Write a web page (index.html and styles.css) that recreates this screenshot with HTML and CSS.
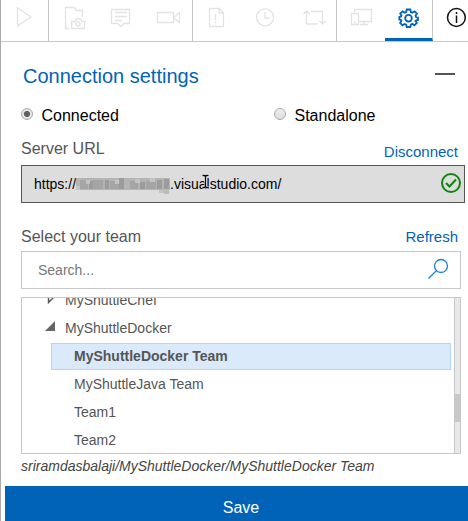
FILE: index.html
```html
<!DOCTYPE html>
<html lang="en">
<head>
<meta charset="utf-8">
<title>Connection settings</title>
<link rel="stylesheet" href="styles.css">
</head>
<body>
<div class="panel">
  <nav class="toolbar">
    <span class="tool end"><svg viewBox="0 0 48 41"><path d="M16.500 7.800V26L30 17z"/></svg></span>
    <span class="tool"><svg viewBox="0 0 48 41"><path d="M20 28.500H16.500V7.500H25.500L27 10.500H33.500V17M22.500 28.500V21.500H26L27.500 19H31.500L33 21.500H35.500V28.500z"/><circle cx="29" cy="24" r="2"/></svg></span>
    <span class="tool"><svg viewBox="0 0 48 41"><path d="M14.500 9.500H32.500V23.500H27L24 26.500L21 23.500H14.500zM18 12.500H30M18 16.500H30M18 20.500H25"/></svg></span>
    <span class="tool end"><svg viewBox="0 0 48 41"><path d="M12.500 12.500H28.500V22.500H12.500zM28.500 17.500L34.500 12.500V22.500z"/></svg></span>
    <span class="tool"><svg viewBox="0 0 48 41"><path d="M16.500 8.500H26L30.500 13V26.500H16.500zM26 8.500V13H30.500M22.500 14V20M22.500 21.500V23.500"/></svg></span>
    <span class="tool"><svg viewBox="0 0 48 41"><circle cx="24" cy="17.300" r="8.500"/><path d="M24 12V18H28.500"/></svg></span>
    <span class="tool end"><svg viewBox="0 0 48 41"><path d="M14.500 14L17.500 11L20.500 14M17.500 11V24H29M22 11.500H33.500V24M30.500 21L33.500 24L36.500 21"/></svg></span>
    <span class="tool"><svg viewBox="0 0 48 41"><path d="M17.500 12V9.500H34.500V21.500H22M14.500 13.500H21.500V24.500H14.500zM27 21.500V24.500M23 24.500H31M17 22.500H19"/></svg></span>
    <span class="tool end active"><svg viewBox="0 0 48 41"><path class="gear" d="M21.700 9.500H25.300L25.800 12L27.400 12.700L29.500 11.300L31.900 13.700L30.500 15.800L31.200 17.300L33 17.600V20L31.200 20.400L30.500 21.100L31.800 22.900L29.400 25.300L27.400 23.900L25.800 24.600L25.300 27H21.700L21.200 24.600L19.600 23.900L17.500 25.300L15.100 22.900L16.500 20.900L15.800 19.800L14.300 19.500V16.900L15.800 16.600L16.500 15.700L15.200 13.700L17.600 11.300L19.600 12.700L21.200 12z"/><circle class="gear" cx="23.500" cy="18.200" r="3.300"/></svg></span>
    <span class="tool info"><svg viewBox="0 0 48 41"><circle cx="23.400" cy="17.500" r="8.900"/><path d="M23.500 12V14M23.500 15.500V23"/></svg></span>
  </nav>
  <main class="content">
    <header class="heading"><h1>Connection settings</h1><span class="minimize"></span></header>
    <div class="modes">
      <label class="mode"><span class="radio checked"></span>Connected</label>
      <label class="mode"><span class="radio"></span>Standalone</label>
    </div>
    <div class="row server"><span class="label">Server URL</span><a>Disconnect</a></div>
    <div class="url">
      <span>https://</span><svg class="mask" viewBox="0 0 94 20">
        <path fill="#b4b4b4" d="M0 3h94v12H0z"/><path fill="#a5a5a5" d="M4 5h8v9H4zM17 5h10v9H17zM34 6h10v8H34zM54 6h8v8h-8zM70 6h10v8H70z"/><path fill="#9c9c9c" d="M13 6h4v8h-4zM29 5h4v9h-4zM43 3h5v11h-5zM64 7h5v7h-5zM81 5h5v9h-5zM88 4h5v10h-5z"/><path fill="#c4c4c4" d="M0 11h4v4H0zM10 5h4v4h-4zM39 5h4v4h-4zM59 4h5v4h-5zM74 3h5v4h-5zM83 15h5v3h-5z"/><path fill="#bbb" d="M88 14h5v5h-5z"/>
      </svg><span>.visualstudio.com/</span>
      <svg class="valid" viewBox="0 0 20 20"><circle cx="10" cy="10" r="9"/><path d="M5 10L8.500 13.500L15 6.500"/></svg>
      <svg class="cursor" viewBox="0 0 9 16"><path class="halo" d="M1.500 1.500H3.500L4.500 2.500L5.500 1.500H7.500M4.500 2V13M1.500 13.500H3.500L4.500 12.500L5.500 13.500H7.500"/><path d="M1.500 1.500H3.500L4.500 2.500L5.500 1.500H7.500M4.500 2V13M1.500 13.500H3.500L4.500 12.500L5.500 13.500H7.500"/></svg>
    </div>
    <div class="row team"><span class="label">Select your team</span><a>Refresh</a></div>
    <div class="search"><span>Search...</span><svg viewBox="0 0 22 22"><circle cx="14" cy="8" r="6.500"/><path d="M9.400 12.600L1.500 20.500"/></svg></div>
    <div class="tree">
      <div class="items">
        <div class="node parent"><svg viewBox="0 0 12 12"><path class="closed" d="M3.500 -1.500V8.500L8.500 3.500z"/></svg>MyShuttleChef</div>
        <div class="node parent"><svg viewBox="0 0 12 12"><path class="open" d="M10 -1V9H0z"/></svg>MyShuttleDocker</div>
        <div class="node leaf selected">MyShuttleDocker Team</div>
        <div class="node leaf">MyShuttleJava Team</div>
        <div class="node leaf">Team1</div>
        <div class="node leaf">Team2</div>
      </div>
      <div class="track"><div class="thumb"></div></div>
    </div>
    <p class="path">sriramdasbalaji/MyShuttleDocker/MyShuttleDocker Team</p>
  </main>
  <div class="save">Save</div>
</div>
</body>
</html>
```

FILE: styles.css
```css
* { box-sizing: border-box; }
body { margin: 0; background: #fff; font-family: "Liberation Sans", Arial, sans-serif; color: #000; overflow: hidden; }
.panel { height: 521px; border-left: 1px solid #aaa; display: flex; flex-direction: column; overflow: hidden; }
svg { fill: none; stroke: currentColor; display: block; flex: none; overflow: visible; }
.toolbar { display: flex; height: 42px; border-bottom: 1px solid #c8c8c8; flex: none; }
.tool { width: 48px; height: 41px; flex: none; color: #e3e3e3; position: relative; }
.tool svg { width: 48px; height: 41px; stroke-width: 1.3; }
.end { border-right: 1px solid #c8c8c8; }
.active { color: #0063b8; border-bottom: 3px solid #0063b8; }
.tool .gear { stroke-width: 1.8; }
.info { color: #111; }
.info svg { stroke-width: 1.5; }
.content { padding-left: 20px; }
.heading { display: flex; justify-content: space-between; height: 62px; padding: 22px 13px 0 2px; }
h1 { margin: 0; font-size: 20px; font-weight: 400; line-height: 24px; color: #0063b8; }
.minimize { width: 20px; height: 2px; margin-top: 9px; background: #555; }
.modes { display: flex; height: 34px; }
.mode { display: flex; width: 253px; flex: none; font-size: 16px; line-height: 24px; gap: 8.5px; }
.radio { width: 12px; height: 12px; margin-top: 4px; border: 1px solid #aaa; border-radius: 50%; background: linear-gradient(#eee, #ddd); flex: none; }
.checked { background: radial-gradient(circle, #606060 0 2.700px, #e5e5e5 3.400px); }
.row { display: flex; justify-content: space-between; }
.label { font-size: 16px; line-height: 20px; color: #555; }
.row a { color: #0063b8; font-size: 15px; line-height: 20px; }
.server { height: 27px; padding-right: 10px; }
.server .label { margin-top: 1px; }
.server a { margin-top: 4px; }
.url { width: 444px; height: 38px; border: 1px solid #555; background: #ddd; display: flex; align-items: center; padding: 0 3px 1px 12px; font-size: 14px; position: relative; }
.url span { padding-top: 1px; }
.mask { width: 94px; height: 20px; stroke: none; margin-top: 2px; filter: blur(0.6px); }
.valid { width: 20px; height: 20px; margin: 0 0 1px auto; color: #108610; stroke-width: 2; }
.cursor { position: absolute; left: 179px; top: 8px; width: 9px; height: 16px; color: #000; stroke-width: 1.3; }
.halo { stroke: #fff; stroke-width: 2.4; }
.team { height: 48px; padding: 24px 10px 0 0; }
.search { width: 440px; height: 38px; border: 1px solid #c8c8c8; display: flex; align-items: center; justify-content: space-between; padding: 0 11px 0 16px; font-size: 14px; color: #777; }
.search svg { width: 22px; height: 22px; color: #1a7fd6; stroke-width: 1.3; margin-bottom: 2px; }
.tree { width: 440px; height: 157px; margin-top: 8px; border: 1px solid #c8c8c8; display: flex; overflow: hidden; }
.items { flex: 1; margin-top: -12px; padding: 0 3px 0 23px; font-size: 14px; color: #555; }
.node { height: 28px; line-height: 28px; }
.parent { display: flex; gap: 8px; }
.parent svg { width: 12px; height: 12px; margin-top: 8px; }
.closed { stroke-width: 1.4; }
.open { fill: #666; stroke: none; }
.leaf { margin-left: 6px; padding-left: 23px; }
.selected { height: 27px; margin-top: 1px; padding-left: 22px; background: #dbeafa; border: 1px solid #b3d4fc; line-height: 24px; font-weight: 700; }
.track { width: 6px; border-left: 1px solid #c8c8c8; background: #e8e8e8; flex: none; }
.thumb { height: 28px; margin: 96px 0 0 -1px; background: #c8c8c8; }
.path { margin: 3px 0 0; font-size: 14px; line-height: 18px; font-style: italic; color: #444; }
.save { height: 35px; margin: auto 0 0 4px; background: #0063b8; color: #fff; text-align: center; padding-left: 9px; font-size: 16px; line-height: 43px; flex: none; overflow: hidden; }
```
